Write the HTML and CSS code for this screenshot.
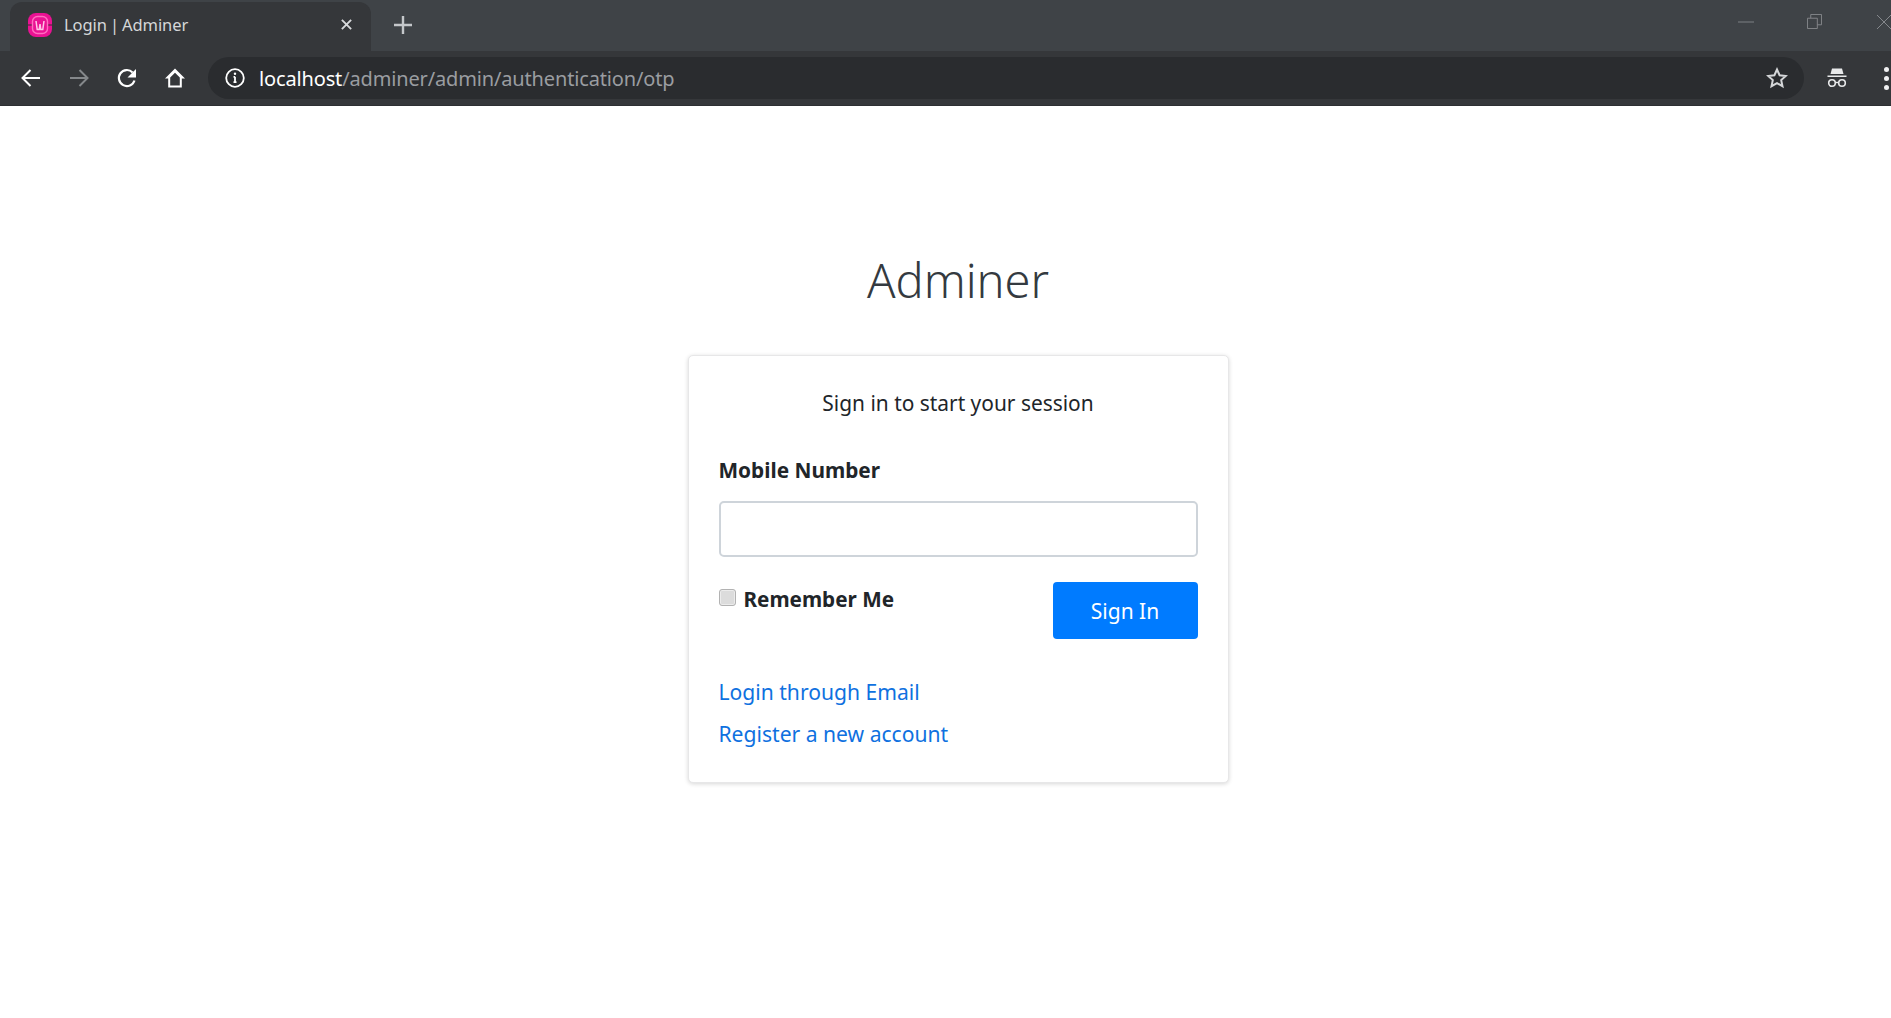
FILE: index.html
```html
<!DOCTYPE html>
<html lang="en">
<head>
<meta charset="utf-8">
<title>Login | Adminer</title>
<link rel="stylesheet" href="styles.css">
</head>
<body>
<header class="chrome">
  <div class="tabstrip">
    <div class="tab">
      <svg class="favicon" viewBox="0 0 24 24"><rect x="0" y="0" width="24" height="24" rx="8" fill="#ea1293"/><path d="M0 12h4M20 12h4" stroke="#3a2a35" stroke-width="1.200"/><rect x="4.500" y="3.500" width="15" height="17" rx="5" fill="none" stroke="#ff6fc0" stroke-width="1.400"/><path d="M8 8l1.200 8.500h2L12 11l.8 5.500h2L16 8" fill="none" stroke="#ffc4e6" stroke-width="1.500"/></svg>
      <span class="tab-title">Login | Adminer</span>
      <svg class="tab-close" viewBox="0 0 14 14"><path d="M2 2l10 10M12 2L2 12" stroke="#d8dadc" stroke-width="2"/></svg>
    </div>
    <svg class="new-tab" viewBox="0 0 18 18"><path d="M9 0v18M0 9h18" stroke="#c4c7ca" stroke-width="2.400"/></svg>
    <div class="window-controls">
      <svg class="win-min" viewBox="0 0 16 2"><path d="M0 1h16" stroke="#7d8084" stroke-width="1"/></svg>
      <svg class="win-restore" viewBox="0 0 16 16"><path d="M.5 4.500h10.500v11H.5zM4 4.500V.5h11.500v11H11" fill="none" stroke="#85888c"/></svg>
      <svg class="win-close" viewBox="0 0 16 16"><path d="M1 1l14 14M15 1L1 15" stroke="#85888c"/></svg>
    </div>
  </div>
  <div class="toolbar">
    <svg class="tool" viewBox="0 0 22 22"><path d="M20 11H3M10.500 3L2.500 11l8 8" fill="none" stroke="#fff" stroke-width="2"/></svg>
    <svg class="tool" viewBox="0 0 22 22"><path d="M2 11h17M11.500 3l8 8-8 8" fill="none" stroke="#85888b" stroke-width="2"/></svg>
    <svg class="tool" viewBox="0 0 22 22"><path d="M18.500 13.500A8 8 0 1 1 16.600 5.400" fill="none" stroke="#fff" stroke-width="2.200"/><path d="M20 2v8.500h-8.500z" fill="#fff"/></svg>
    <svg class="tool" viewBox="0 0 22 22"><path d="M11 1.500L1 11.500h3.200v9h13.600v-9H21zM6.200 18.600v-8l4.800-4.800 4.800 4.800v8z" fill="#fff" fill-rule="evenodd"/></svg>
    <div class="omnibox">
      <svg class="info" viewBox="0 0 20 20"><circle cx="10" cy="10" r="8.800" fill="none" stroke="#fff" stroke-width="1.800"/><path d="M10 8.800v5.400M8.500 14.200h3M8.500 8.800H10" stroke="#fff" stroke-width="1.800"/><circle cx="10" cy="5.800" r="1.200" fill="#fff"/></svg>
      <div class="url"><span class="url-host">localhost</span>/adminer/admin/authentication/otp</div>
      <svg class="star" viewBox="0 0 22 22"><path d="M11 2.500l2.600 5.700 6.200.7-4.600 4.200 1.300 6.100L11 16.100l-5.500 3.100 1.300-6.100L2.200 8.900l6.200-.7z" fill="none" stroke="#d5d7d9" stroke-width="2"/></svg>
    </div>
    <svg class="incognito" viewBox="0 0 22 22"><path d="M6 1.500h10l1.500 5.500h-13zM1.500 8.500h19v1.500h-19z" fill="#e8e9ea"/><circle cx="6" cy="16" r="3.300" fill="none" stroke="#e8e9ea" stroke-width="1.600"/><circle cx="16" cy="16" r="3.300" fill="none" stroke="#e8e9ea" stroke-width="1.600"/><path d="M9 15.500h4" stroke="#e8e9ea" stroke-width="1.400"/></svg>
    <div class="kebab"><i></i><i></i><i></i></div>
  </div>
</header>
<main class="page">
  <h1 class="logo">Adminer</h1>
  <section class="card">
    <p class="lead">Sign in to start your session</p>
    <label class="field-label" for="mobile">Mobile Number</label>
    <input class="field" id="mobile" type="text">
    <div class="actions">
      <label class="remember"><input class="check" type="checkbox"><span>Remember Me</span></label>
      <button class="submit" type="button">Sign In</button>
    </div>
    <a class="link link-first" href="#">Login through Email</a>
    <a class="link" href="#">Register a new account</a>
  </section>
</main>
</body>
</html>
```
FILE: styles.css
```css
* { box-sizing: border-box; }
html, body { margin: 0; height: 100%; overflow: hidden; }
body { background: #fff; font-family: "Noto Sans", "Open Sans", sans-serif; color: #212529; }
svg { display: block; flex: none; }

.chrome { height: 106px; background: #35373a; overflow: hidden; border-bottom: 1px solid #2d2f32; }
.tabstrip { height: 51px; background: #3f4347; display: flex; align-items: center; }
.tab { width: 361px; height: 49px; margin: 2px 0 0 10px; align-self: flex-start; background: #35373a; border-radius: 12px 12px 0 0; display: flex; align-items: center; padding: 0 18px 4px 18px; }
.favicon { width: 24px; height: 24px; }
.tab-title { margin-left: 12px; font-size: 16.500px; color: #d5d7d9; flex: 1; letter-spacing: -.1px; word-spacing: -1px; }
.tab-close { width: 13px; height: 13px; }
.new-tab { width: 18px; height: 18px; margin: 0 0 2px 23px; }
.window-controls { margin-left: auto; display: flex; align-items: center; padding-bottom: 8px; }
.win-min { width: 16px; height: 2px; margin-right: 53px; }
.win-restore { width: 15px; height: 15px; margin-right: 54px; }
.win-close { width: 16px; height: 16px; margin-right: -1px; }

.toolbar { height: 54px; display: flex; align-items: center; padding: 0 0 0 20px; }
.tool { width: 22px; height: 22px; margin-right: 26px; }
.tool:nth-child(4) { margin-right: 22px; }
.omnibox { width: 1596px; height: 42px; background: #2a2c2f; border-radius: 21px; display: flex; align-items: center; padding: 0 16px 0 17px; }
.info { width: 20px; height: 20px; }
.url { margin-left: 14px; font-size: 20px; color: #9a9da1; flex: 1; letter-spacing: -.15px; }
.url-host { color: #fff; }
.star { width: 22px; height: 22px; }
.incognito { width: 22px; height: 22px; margin-left: 22px; }
.kebab { margin-left: 36px; display: flex; flex-direction: column; gap: 4px; }
.kebab i { display: block; width: 5px; height: 5px; border-radius: 50%; background: #f1f1f2; }

.page { display: flex; flex-direction: column; align-items: center; padding: 143px 0 0 25px; }
.logo { margin: 0; font-weight: 300; font-size: 47px; line-height: 62px; color: #343a40; }
.card { width: 541px; height: 428px; margin-top: 44px; padding: 32px 30px 0; background: #fff; border: 1px solid #e7e7e8; border-radius: 5px; box-shadow: 0 1px 4px rgba(0,0,0,.16); display: flex; flex-direction: column; }
.lead { margin: 0; text-align: center; font-size: 20.900px; line-height: 30px; color: #212529; }
.field-label { margin-top: 37px; font-size: 20.800px; font-weight: 700; line-height: 30px; }
.field { height: 56px; margin-top: 16px; width: 100%; border: 2px solid #ced4da; border-radius: 5px; background: #fff; }
.actions { margin-top: 25px; display: flex; justify-content: space-between; align-items: flex-start; height: 57px; }
.remember { display: flex; align-items: center; gap: 8px; font-size: 20.700px; font-weight: 700; line-height: 30px; padding-top: 2px; }
.check { margin: 0; width: 17px; height: 17px; appearance: none; border: 1px solid #b2b2b2; border-radius: 3px; background: #dcdcdc; box-shadow: inset 0 0 0 1px #ececec; position: relative; top: -2px; }
.submit { width: 145px; height: 57px; border: 0; border-radius: 4px; background: #007bff; color: #fff; font: 400 21px "Noto Sans", sans-serif; }
.link { color: #0f71e0; text-decoration: none; font-size: 21.100px; line-height: 42px; align-self: flex-start; }
.link-first { margin-top: 32px; }
```
